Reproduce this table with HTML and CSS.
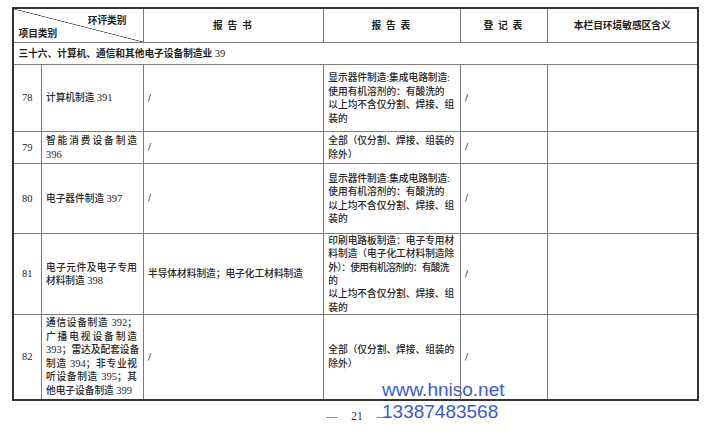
FILE: index.html
```html
<!DOCTYPE html>
<html lang="zh-CN">
<head>
<meta charset="utf-8">
<title>环评类别</title>
<link rel="stylesheet" href="styles.css">
</head>
<body>
<div class="sheet">
  <table class="grid">
    <colgroup>
      <col class="c-no"><col class="c-name"><col class="c-book"><col class="c-form"><col class="c-reg"><col class="c-sens">
    </colgroup>
    <thead>
      <tr class="r-head">
        <th colspan="2" class="diag">
          <div class="diag-box">
            <div class="diag-top">环评类别</div>
            <div class="diag-bot">项目类别</div>
          </div>
        </th>
        <th class="sp">报 告 书</th>
        <th class="sp">报 告 表</th>
        <th class="sp">登 记 表</th>
        <th>本栏目环境敏感区含义</th>
      </tr>
    </thead>
    <tbody>
      <tr class="r-sec">
        <td colspan="6" class="sec">三十六、计算机、通信和其他电子设备制造业 <span class="n">39</span></td>
      </tr>
      <tr class="r78">
        <td class="no">78</td>
        <td class="name"><div>计算机制造 <span class="n">391</span></div></td>
        <td class="txt"><span class="sl">/</span></td>
        <td class="txt form"><div>显示器件制造:集成电路制造:</div><div>使用有机溶剂的：有酸洗的</div><div>以上均不含仅分割、焊接、组</div><div>装的</div></td>
        <td class="txt"><span class="sl">/</span></td>
        <td></td>
      </tr>
      <tr class="r79">
        <td class="no">79</td>
        <td class="name"><div class="fill">智能消费设备制造</div><div><span class="n">396</span></div></td>
        <td class="txt"><span class="sl">/</span></td>
        <td class="txt form"><div>全部（仅分割、焊接、组装的</div><div>除外）</div></td>
        <td class="txt"><span class="sl">/</span></td>
        <td></td>
      </tr>
      <tr class="r80">
        <td class="no">80</td>
        <td class="name"><div>电子器件制造 <span class="n">397</span></div></td>
        <td class="txt"><span class="sl">/</span></td>
        <td class="txt form"><div>显示器件制造:集成电路制造:</div><div>使用有机溶剂的：有酸洗的</div><div>以上均不含仅分割、焊接、组</div><div>装的</div></td>
        <td class="txt"><span class="sl">/</span></td>
        <td></td>
      </tr>
      <tr class="r81">
        <td class="no">81</td>
        <td class="name"><div class="fill">电子元件及电子专用</div><div>材料制造 <span class="n">398</span></div></td>
        <td class="txt">半导体材料制造；电子化工材料制造</td>
        <td class="txt form tight"><div>印刷电路板制造：电子专用材</div><div>料制造（电子化工材料制造除</div><div class="squeeze">外）：使用有机溶剂的：有酸洗</div><div>的</div><div>以上均不含仅分割、焊接、组</div><div>装的</div></td>
        <td class="txt"><span class="sl">/</span></td>
        <td></td>
      </tr>
      <tr class="r82">
        <td class="no">82</td>
        <td class="name"><div class="fill">通信设备制造 <span class="n">392</span>；</div><div class="fill">广播电视设备制造</div><div class="fill"><span class="n">393</span>；雷达及配套设备</div><div class="fill">制造 <span class="n">394</span>；非专业视</div><div class="fill">听设备制造 <span class="n">395</span>；其</div><div>他电子设备制造 <span class="n">399</span></div></td>
        <td class="txt"><span class="sl">/</span></td>
        <td class="txt form"><div>全部（仅分割、焊接、组装的</div><div>除外）</div></td>
        <td class="txt"><span class="sl">/</span></td>
        <td></td>
      </tr>
    </tbody>
  </table>
  <div class="pageno">— 21 —</div>
  <div class="wm">
    <div>www.hniso.net</div>
    <div>13387483568</div>
  </div>
</div>
</body>
</html>
```
FILE: styles.css
```css
html, body {
  margin: 0;
  padding: 0;
  background: #ffffff;
}

.sheet {
  position: relative;
  width: 714px;
  height: 434px;
  overflow: hidden;
}

.grid {
  border-collapse: collapse;
  table-layout: fixed;
  width: 687px;
  margin: 7px 0 0 12px;
  border: 2px solid #333333;
  font-family: "Liberation Serif", "Noto Sans CJK SC", serif;
  font-size: 9.7px;
  line-height: 13.5px;
  font-weight: 500;
  color: #262626;
}

.c-no { width: 28px; }
.c-name { width: 102px; }
.c-book { width: 180px; }
.c-form { width: 137px; }
.c-reg { width: 87px; }
.c-sens { width: 151px; }

.grid th,
.grid td {
  border: 1px solid #7c7c7c;
  padding: 0 5px 0 4.5px;
  vertical-align: middle;
  text-align: left;
  white-space: nowrap;
}

.grid th {
  font-family: "Noto Sans CJK SC", sans-serif;
  font-weight: 700;
  color: #1e1e1e;
  text-align: center;
  padding: 0;
}

.grid th.sp {
  white-space: pre;
  letter-spacing: 1.3px;
}

.r-head { height: 34px; }
.r-sec { height: 22px; }
.r78 { height: 67px; }
.r79 { height: 32px; }
.r80 { height: 70px; }
.r81 { height: 81px; }
.r82 { height: 85px; }

.grid th.diag {
  padding: 0;
  text-align: left;
  background-image: linear-gradient(to top right,
    rgba(60, 60, 60, 0) calc(50% - 0.7px),
    #454545 50%,
    rgba(60, 60, 60, 0) calc(50% + 0.7px));
}

.diag-box {
  height: 33px;
  display: flex;
  flex-direction: column;
  justify-content: space-between;
  padding: 5px 16px 2px 4.5px;
  box-sizing: border-box;
  line-height: 13px;
}

.diag-top {
  text-align: right;
}

.diag-bot {
  text-align: left;
}

.grid td.sec {
  font-weight: 700;
  color: #1e1e1e;
  padding-left: 4.5px;
}

.n {
  font-size: 10.5px;
}

.sec .n {
  font-weight: 400;
}

.sl {
  font-family: "DejaVu Sans", sans-serif;
  font-size: 9px;
  color: #333333;
}

.grid td.no {
  text-align: center;
  padding: 0;
  font-size: 10.5px;
}

.grid td.name {
  padding: 0 5.5px 0 4.5px;
}

.fill {
  text-align: justify;
  text-align-last: justify;
}

.grid td.form {
  padding-left: 4.8px;
  padding-right: 2px;
}

.grid td.tight {
  line-height: 13.3px;
}

.squeeze {
  letter-spacing: -0.75px;
}

.pageno {
  margin-top: 8px;
  text-align: center;
  font-family: "Liberation Serif", serif;
  font-size: 11.5px;
  line-height: 14px;
  color: #333333;
  word-spacing: 11px;
}

.wm {
  position: absolute;
  left: 382px;
  top: 379px;
  font-family: "Liberation Sans", Arial, sans-serif;
  font-size: 19px;
  line-height: 22.3px;
  color: #3a5ad6;
  white-space: nowrap;
}
```
